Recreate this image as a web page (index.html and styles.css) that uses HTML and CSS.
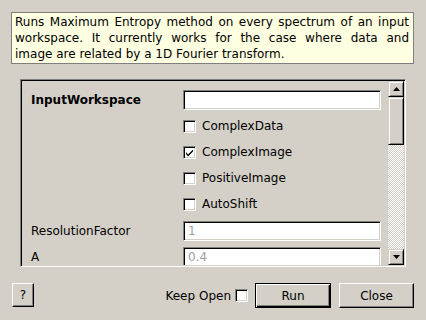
FILE: index.html
```html
<!DOCTYPE html>
<html>
<head>
<meta charset="utf-8">
<link rel="stylesheet" href="styles.css">
</head>
<body>
<div class="dialog">
  <div class="desc">
    <p class="desc-lines">Runs Maximum Entropy method on every spectrum of an input workspace. It currently works for the case where data and</p>
    <p class="desc-last">image are related by a 1D Fourier transform.</p>
  </div>
  <div class="frame">
    <div class="content">
      <div class="grid">
        <div class="label bold">InputWorkspace</div>
        <div class="field"></div>

        <div></div>
        <label class="check"><span class="box"></span>ComplexData</label>

        <div></div>
        <label class="check"><span class="box"><svg width="9" height="9" viewBox="0 0 9 9"><path d="M1 4 L3 6.5 L8 1.5 L8 3.5 L3 8.5 L1 6 Z" fill="#000"/></svg></span>ComplexImage</label>

        <div></div>
        <label class="check"><span class="box"></span>PositiveImage</label>

        <div></div>
        <label class="check"><span class="box"></span>AutoShift</label>

        <div class="label pad">ResolutionFactor</div>
        <div class="field pad-f"><span class="ph">1</span></div>

        <div class="label pad">A</div>
        <div class="field pad-f"><span class="ph">0.4</span></div>
      </div>
    </div>
    <div class="scrollbar">
      <div class="sbtn"><svg width="7" height="4" viewBox="0 0 7 4"><path d="M3.5 0 L7 4 L0 4 Z" fill="#000"/></svg></div>
      <div class="track">
        <div class="thumb"></div>
      </div>
      <div class="sbtn"><svg width="7" height="4" viewBox="0 0 7 4"><path d="M0 0 L7 0 L3.5 4 Z" fill="#000"/></svg></div>
    </div>
  </div>
  <div class="footer">
    <button class="btn help">?</button>
    <div class="spacer"></div>
    <label class="keep">Keep Open <span class="box small"></span></label>
    <button class="btn run">Run</button>
    <button class="btn close">Close</button>
  </div>
</div>
</body>
</html>
```
FILE: styles.css
```css
html, body {
  margin: 0;
  padding: 0;
}
body {
  width: 426px;
  height: 320px;
  overflow: hidden;
  background: #d4d0c8;
  font-family: "DejaVu Sans", sans-serif;
  font-size: 12px;
  color: #000;
}
.dialog {
  display: flex;
  flex-direction: column;
  padding-top: 12px;
}
.desc {
  margin: 0 12px 0 11px;
  border: 1px solid #7f7f7f;
  background: #ffffe1;
  padding: 1px 4px 1px 3px;
  line-height: 16px;
  height: 48px;
}
.desc p { margin: 0; }
.desc-lines {
  text-align: justify;
  text-align-last: justify;
}
.desc-last { text-align: left; }
.frame {
  margin: 15px 0 0 20px;
  width: 386px;
  height: 188px;
  box-sizing: border-box;
  border: 1px solid;
  border-color: #808080 #fff #fff #808080;
  box-shadow: inset 1px 1px 0 #000, inset -1px -1px 0 #d4d0c8;
  padding: 1px;
  display: flex;
}
.content {
  flex: 1;
  overflow: hidden;
  padding: 9px 0 0 9px;
}
.grid {
  display: grid;
  grid-template-columns: 152px 198px;
  grid-auto-rows: 20px;
  row-gap: 6px;
  align-items: center;
}
.label { white-space: nowrap; }
.bold { font-weight: bold; }
.pad { padding-top: 1px; height: 21px; display: flex; align-items: center; }
.field {
  height: 20px;
  box-sizing: border-box;
  background: #fff;
  border: 1px solid;
  border-color: #808080 #fff #fff #808080;
  box-shadow: inset 1px 1px 0 #000, inset -1px -1px 0 #d4d0c8;
  padding: 0 4px;
  display: flex;
  align-items: center;
}
.pad-f { margin-top: 1px; }
.ph { color: #a0a0a0; }
.check {
  display: flex;
  align-items: center;
  gap: 6px;
}
.box {
  width: 13px;
  height: 13px;
  box-sizing: border-box;
  background: #fff;
  border: 1px solid;
  border-color: #808080 #fff #fff #808080;
  box-shadow: inset 1px 1px 0 #000, inset -1px -1px 0 #d4d0c8;
  display: flex;
  align-items: center;
  justify-content: center;
  flex: none;
}
.box svg { display: block; }
.scrollbar {
  width: 16px;
  display: flex;
  flex-direction: column;
}
.sbtn, .thumb {
  box-sizing: border-box;
  background: #d4d0c8;
  border: 1px solid;
  border-color: #d4d0c8 #000 #000 #d4d0c8;
  box-shadow: inset 1px 1px 0 #fff, inset -1px -1px 0 #808080;
}
.sbtn {
  height: 16px;
  display: flex;
  align-items: center;
  justify-content: center;
}
.sbtn svg { display: block; }
.track {
  flex: 1;
  background: repeating-conic-gradient(#fff 0 25%, #d4d0c8 0 50%) 0 0 / 2px 2px;
}
.thumb {
  height: 48px;
}
.footer {
  display: flex;
  align-items: center;
  margin: 16px 12px 0 12px;
  height: 25px;
}
.spacer { flex: 1; }
.btn {
  font-family: "DejaVu Sans", sans-serif;
  font-size: 12px;
  color: #000;
  background: #d4d0c8;
  box-sizing: border-box;
  height: 25px;
  border: 1px solid;
  border-color: #fff #000 #000 #fff;
  box-shadow: inset -1px -1px 0 #808080;
  padding: 0;
  margin: 0;
}
.help { width: 22px; height: 24px; margin-top: -1px; }
.keep {
  display: flex;
  align-items: center;
  gap: 4px;
  margin-right: 7px;
}
.run {
  width: 76px;
  border: 1px solid #000;
  box-shadow: inset 1px 1px 0 #fff, inset -1px -1px 0 #000, inset -2px -2px 0 #808080;
  margin-right: 8px;
}
.close { width: 75px; }
```
